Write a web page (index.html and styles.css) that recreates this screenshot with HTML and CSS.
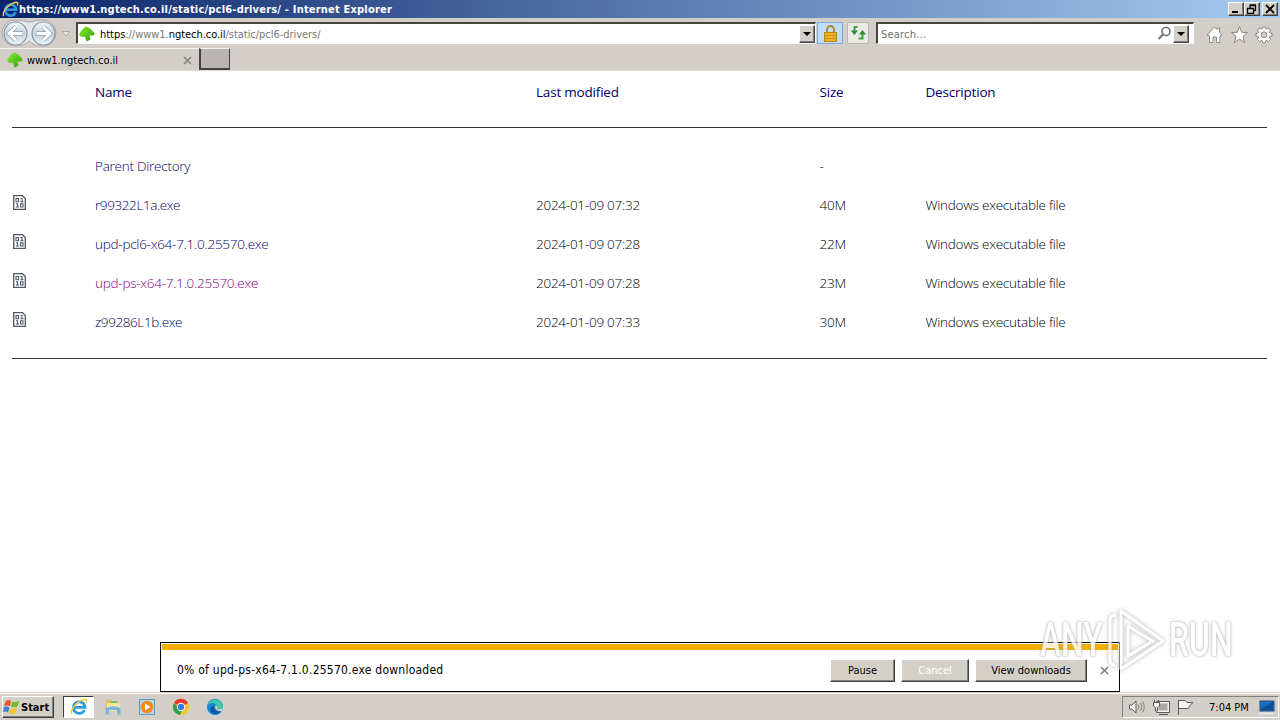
FILE: index.html
```html
<!DOCTYPE html>
<html lang="en">
<head>
  <meta charset="UTF-8">
  <title>https://www1.ngtech.co.il/static/pcl6-drivers/</title>
  <link rel="stylesheet" href="styles.css">
</head>
<body>
  <svg class="defs" width="0" height="0">
    <defs>
      <linearGradient id="green" x1="0" y1="0" x2="1" y2="1">
        <stop offset="0" stop-color="#8af02c"/>
        <stop offset="1" stop-color="#2b9a0c"/>
      </linearGradient>
      <linearGradient id="glass" x1="0" y1="0" x2="0" y2="1">
        <stop offset="0" stop-color="#f4f7fa"/>
        <stop offset=".5" stop-color="#c4d0dd"/>
        <stop offset="1" stop-color="#edf6fb"/>
      </linearGradient>
      <symbol id="tree" viewBox="0 0 16 16">
        <path d="M7 .5 C10 1 14.500 5 15.700 8 C15.500 9.500 13 9.800 10.500 9.500 L11.500 13.500 L7.500 15.500 L6 10.500 C4 11.500 1 11 .3 9 C.5 6 4 2 7 .5Z" fill="url(#green)"/>
      </symbol>
      <symbol id="ie" viewBox="0 0 18 18">
        <path d="M14.500 12 A5.800 5.800 0 1 1 15 9.300 H5" fill="none" stroke="#2a9be0" stroke-width="2.800"/>
        <path d="M2 16 C-1 12 8 2 15.500 1.300 C17.500 1.300 17 3.500 16 5" fill="none" stroke="#f3c644" stroke-width="1.500"/>
      </symbol>
      <symbol id="file" viewBox="0 0 13 15">
        <path d="M.7 .7 H9.500 L12.300 3.500 V14.300 H.7Z" fill="#fff" stroke="#4c5a68" stroke-width="1.300"/>
        <path d="M3 3.500 H5.500 V6.700 H3Z M7.500 3.500 H9 V6.700 M7.300 6.800 H10.500 M3 8.700 H4.500 V12 M2.800 12 H6 M7.500 8.700 H10 V12 H7.500Z" fill="none" stroke="#4c5a68" stroke-width="1.100"/>
      </symbol>
    </defs>
  </svg>

  <header class="titlebar">
    <svg class="title-icon"><use href="#ie"/></svg>
    <span class="title-text">https://www1.ngtech.co.il/static/pcl6-drivers/ - Internet Explorer</span>
    <div class="window-buttons">
      <button><svg width="12" height="10"><path d="M2 8 H8" stroke="#000" stroke-width="2"/></svg></button>
      <button><svg width="12" height="10"><path d="M4 4 V1.500 H9.500 V6.500 H8 M4 1 H10 M1.500 4.500 H7.500 V9.500 H1.500Z M1 4.500 H8" fill="none" stroke="#000" stroke-width="1.300"/></svg></button>
      <button class="close"><svg width="12" height="10"><path d="M2 1 L10 9 M10 1 L2 9" stroke="#000" stroke-width="1.800"/></svg></button>
    </div>
  </header>

  <div class="toolbar">
    <svg class="nav-buttons" width="72" height="30">
      <path d="M2 15 A13 13 0 0 1 15 2 Q22 2 29 4 Q36 2 43 2 A13 13 0 0 1 43 28 Q33 28 29 23 Q25 28 15 28 A13 13 0 0 1 2 15Z" fill="#e4e5e7" stroke="#aaa9ac"/>
      <circle cx="15.500" cy="15.500" r="11.500" fill="url(#glass)" stroke="#8796a5" stroke-width="1.200"/>
      <circle cx="43.500" cy="15.500" r="11.500" fill="url(#glass)" stroke="#8796a5" stroke-width="1.200"/>
      <path d="M23 15.500 H9 M15.500 9 L9 15.500 L15.500 22" fill="none" stroke="#8fa0b0" stroke-width="4.500"/>
      <path d="M36 15.500 H50 M43.500 9 L50 15.500 L43.500 22" fill="none" stroke="#8fa0b0" stroke-width="4.500"/>
      <path d="M22.500 15.500 H9 M15.500 9 L9 15.500 L15.500 22" fill="none" stroke="#fff" stroke-width="3"/>
      <path d="M36.500 15.500 H50 M43.500 9 L50 15.500 L43.500 22" fill="none" stroke="#fff" stroke-width="3"/>
      <path d="M62 13.500 H70 L66 18Z" fill="#e7e4df" stroke="#aaa6a0"/>
    </svg>
    <div class="address">
      <svg class="tree"><use href="#tree"/></svg>
      <span class="url"><b>https</b>://www1.<b>ngtech.co.il</b>/static/pcl6-drivers/</span>
      <span class="drop"></span>
    </div>
    <div class="lock">
      <svg width="15" height="17"><path d="M4 8 V4.500 A3.500 3.500 0 0 1 11 4.500 V8" fill="none" stroke="#a98224" stroke-width="1.800"/><rect x="1.500" y="7.500" width="12" height="9" fill="#f0b51d" stroke="#b9851a"/><path d="M2 10.500 H13 M2 13.500 H13" stroke="#c98f18"/></svg>
    </div>
    <div class="refresh">
      <svg width="16" height="14"><path d="M7.500 1 H4.500 V5 M8.500 12.500 H12.500 V8" fill="none" stroke="#38a53c" stroke-width="2"/><path d="M.5 4.500 H8 L4.500 9Z M9 8.500 H16 L12.500 4Z" fill="#279330"/></svg>
    </div>
    <div class="search">
      <span class="hint">Search...</span>
      <svg width="15" height="15"><circle cx="9" cy="5.500" r="4" fill="none" stroke="#777" stroke-width="1.700"/><path d="M6 8.500 L1.500 13" stroke="#777" stroke-width="2.200"/></svg>
      <span class="drop"></span>
    </div>
    <svg class="tools" width="72" height="20" fill="#fff" stroke="#8a8885">
      <path d="M1 10 L8.500 2 L11 4.500 V3 H13.500 V7.500 L16 10 L14 11 V17.500 H10.500 V12 H7 V17.500 H3.500 V11Z"/>
      <path d="M33.500 1.500 L35.700 7.300 L41.500 7.500 L37 11.300 L38.500 17.500 L33.500 14 L28.500 17.500 L30 11.300 L25.500 7.500 L31.300 7.300Z"/>
      <path d="M56.700 2 H59.300 L60 4.200 L62.500 3 L64.500 5 L63.300 7.500 L66 8.500 V11 L63.300 12 L64.500 14.500 L62.500 16.500 L60 15.300 L59.300 18 H56.700 L56 15.300 L53.500 16.500 L51.500 14.500 L52.700 12 L50 11 V8.500 L52.700 7.500 L51.500 5 L53.500 3 L56 4.200Z"/>
      <circle cx="58" cy="9.800" r="3" fill="#d4cec8"/>
    </svg>
  </div>

  <div class="tabs">
    <div class="tab">
      <svg class="tree"><use href="#tree"/></svg>
      <span class="tab-name">www1.ngtech.co.il</span>
      <svg width="9" height="9"><path d="M1 1 L8 8 M8 1 L1 8" stroke="#858280" stroke-width="1.700"/></svg>
    </div>
    <div class="new-tab"></div>
  </div>

  <main class="listing">
    <div class="row head">
      <span></span><a>Name</a><a>Last modified</a><a>Size</a><a>Description</a>
    </div>
    <hr>
    <div class="row">
      <span></span><a>Parent Directory</a><span></span><span>-</span><span></span>
    </div>
    <div class="row">
      <svg class="file"><use href="#file"/></svg><a class="short">r99322L1a.exe</a><span>2024-01-09 07:32</span><span>40M</span><span>Windows executable file</span>
    </div>
    <div class="row">
      <svg class="file"><use href="#file"/></svg><a>upd-pcl6-x64-7.1.0.25570.exe</a><span>2024-01-09 07:28</span><span>22M</span><span>Windows executable file</span>
    </div>
    <div class="row">
      <svg class="file"><use href="#file"/></svg><a class="visited">upd-ps-x64-7.1.0.25570.exe</a><span>2024-01-09 07:28</span><span>23M</span><span>Windows executable file</span>
    </div>
    <div class="row">
      <svg class="file"><use href="#file"/></svg><a class="short">z99286L1b.exe</a><span>2024-01-09 07:33</span><span>30M</span><span>Windows executable file</span>
    </div>
    <hr class="last">
  </main>

  <div class="download">
    <span class="message">0% of upd-ps-x64-7.1.0.25570.exe downloaded</span>
    <button class="pause">Pause</button>
    <button class="cancel" disabled>Cancel</button>
    <button class="view">View downloads</button>
    <svg width="9" height="9"><path d="M1 1 L8 8 M8 1 L1 8" stroke="#858280" stroke-width="1.700"/></svg>
  </div>

  <div class="watermark">
    <span>ANY</span>
    <svg width="58" height="66" viewBox="0 0 58 66" fill="none" stroke="#fff" stroke-width="3" stroke-linejoin="round">
      <path d="M8 8 Q2 8 2 13 V53 Q2 58 8 59 M13 4 L55 34 L13 62Z M20 19 V49 L43 35 M20 19 L46 35"/>
    </svg>
    <span>RUN</span>
  </div>

  <footer class="taskbar">
    <button class="start">
      <svg width="17" height="16"><path d="M3 2 Q6 0 8 2 L7 7 Q4 6 1 7Z" fill="#e8562a"/><path d="M9 2.500 Q12 4 16 2 L14.500 7.500 Q11 9 8 7.500Z" fill="#75b62c"/><path d="M1 8 Q4 7 6.500 8.500 L5 13.500 Q3 12 0 13Z" fill="#3c82cf"/><path d="M7.500 9 Q11 10.500 14 9 L12.500 14 Q9 16 6 14Z" fill="#f5c526"/></svg>
      Start
    </button>
    <div class="task-active"><svg width="18" height="18"><use href="#ie"/></svg></div>
    <svg class="task" width="18" height="18"><path d="M2 2 H7 L9 4 H15 V12 H2Z" fill="#dfbd5c"/><path d="M3 5 H16 V13 H3Z" fill="#f7e6a0"/><path d="M7 3 H13 V5 H7Z" fill="#7dbb6a"/><path d="M1.500 16.500 V10 Q9 6.500 16.500 10 V16.500 H13 V12 H5 V16.500Z" fill="#79b8dc"/></svg>
    <svg class="task" width="18" height="18"><rect x="1.500" y="1.500" width="15" height="15" fill="#b9d9f2" stroke="#5b9ac8"/><circle cx="9" cy="9" r="6.300" fill="#f28a16"/><path d="M7 5.500 L12.500 9 L7 12.500Z" fill="#fff"/></svg>
    <svg class="task" width="18" height="18"><circle cx="9" cy="9" r="8" fill="#fbc71e"/><path d="M9 9 L2 5 A8 8 0 0 1 16 5Z" fill="#e43d30"/><path d="M2 5 A8 8 0 0 0 8 17 L11 11 L6 9Z" fill="#2da24b"/><circle cx="9" cy="9" r="4.200" fill="#fff"/><circle cx="9" cy="9" r="3.200" fill="#3478e5"/></svg>
    <svg class="task" width="18" height="18"><circle cx="9" cy="9" r="8" fill="#1784d0"/><path d="M1.500 7 A8 8 0 0 1 17 9 Q16 12 11 11 Q12 6 7 5 Q3 5 1.500 7Z" fill="#41c9a5"/><path d="M8 8 Q7 14 15 13.500 Q10 18 5 14 Q3 9 8 8Z" fill="#0b54a0"/><path d="M9 8 Q12 7 11 11 Q15 12 17 9.500 L16 13 Q9 14 9 8Z" fill="#d4cec8"/></svg>
    <div class="tray">
      <svg width="67" height="18" fill="#f5f4f2" stroke="#5c5a58">
        <path d="M1.500 7 H4 L8 3 V15 L4 11 H1.500Z"/>
        <path d="M10 6.500 Q12 9 10 11.500 M12.500 5 Q15.500 9 12.500 13 M14.500 3.500 Q18 9 14.500 14.500" fill="none" stroke="#85827f"/>
        <path d="M29.500 4.500 H40.500 V13.500 H29.500Z" fill="#a9a6a3" stroke="#f5f4f2" stroke-width="2"/>
        <path d="M28.500 3.500 H41.500 V14.500 H28.500Z M31 16.500 H40" fill="none"/>
        <path d="M26.500 2 V4 M30.500 2 V4 M25.500 4.500 H31.500 V8 L29.500 9.500 V13 H27.500 V9.500 L25.500 8Z"/>
        <path d="M50.500 2 V17 M51 2.500 H57 L59 4.500 H65 L62 7.500 L60 10.500 H51"/>
      </svg>
      <time>7:04 PM</time>
      <svg width="17" height="17"><rect x="2" y="2" width="14" height="10" fill="#176fc5" stroke="#294c72"/><path d="M3 10 L15 3 V11 H3Z" fill="#0b4d9d"/><path d="M1 14.500 H15" stroke="#dde7ef" stroke-width="2"/></svg>
    </div>
  </footer>
</body>
</html>
```

FILE: styles.css
```css
* {
  box-sizing: border-box;
}

body {
  width: 1280px;
  height: 720px;
  margin: 0;
  overflow: hidden;
  display: flex;
  flex-direction: column;
  background: #fff;
  color: #000;
  font: 11px "DejaVu Sans Condensed", "DejaVu Sans", sans-serif;
  white-space: nowrap;
}

.defs {
  position: absolute;
}

svg {
  flex-shrink: 0;
}

button {
  padding: 0;
  background: #d4d0c8;
  border: 1px solid;
  border-color: #fff #404040 #404040 #fff;
  box-shadow: inset -1px -1px #808080;
  font: inherit;
}

.titlebar {
  height: 18px;
  display: flex;
  align-items: center;
  background: linear-gradient(90deg, #0a246a, #a6caf0);
  color: #fff;
  font-weight: bold;
}

.title-icon {
  width: 17px;
  height: 17px;
  margin: 0 0 0 2px;
}

.title-text {
  letter-spacing: .2px;
}

.window-buttons {
  display: flex;
  margin-left: auto;
  padding-right: 2px;
}

.window-buttons button {
  width: 16px;
  height: 14px;
  display: flex;
  align-items: center;
  justify-content: center;
}

.window-buttons .close {
  margin-left: 2px;
}

.toolbar {
  height: 30px;
  display: flex;
  align-items: center;
  background: #d4cec8;
}

.address, .search {
  height: 22px;
  display: flex;
  align-items: center;
  background: #fff;
  border: 1px solid #fff;
  border-top: 2px solid #484440;
  border-left: 2px solid #484440;
}

.address {
  width: 740px;
  margin-left: 4px;
}

.tree {
  width: 16px;
  height: 16px;
}

.address .tree {
  margin-left: 1px;
}

.url {
  margin-left: 5px;
  padding-top: 1px;
  color: #777;
  letter-spacing: -.04px;
}

.url b {
  color: #000;
  font-weight: normal;
}

.drop {
  width: 16px;
  height: 18px;
  margin-left: auto;
  display: flex;
  align-items: center;
  justify-content: center;
  background: #d4d0c8;
  border: 1px solid;
  border-color: #fff #404040 #404040 #fff;
  box-shadow: inset -1px -1px #808080;
}

.drop::after {
  content: "";
  border: 4px solid transparent;
  border-top-color: #000;
  border-bottom: 0;
}

.lock, .refresh {
  height: 22px;
  display: flex;
  align-items: center;
  justify-content: center;
}

.lock {
  width: 26px;
  margin-left: 1px;
  background: #c3dbfa;
  border: 1px solid #7fabdf;
}

.refresh {
  width: 22px;
  margin-left: 4px;
  background: #eceae7;
  border: 1px solid #b9b5b0;
  border-radius: 2px;
}

.search {
  width: 318px;
  margin-left: 7px;
  padding-left: 3px;
  color: #707070;
}

.hint {
  padding-top: 1px;
  letter-spacing: .2px;
}

.search svg {
  margin-left: auto;
}

.search .drop {
  margin: 0 4px 0 1px;
}

.tools {
  margin: 4px 0 0 12px;
}

.tabs {
  height: 23px;
  display: flex;
  background: #d4cec8;
  border-bottom: 1px solid #dedad6;
}

.tab {
  width: 199px;
  display: flex;
  align-items: center;
  padding: 1px 7px 0 7px;
  border-top: 1px solid #f6f4f2;
}

.tab-name {
  margin: 0 auto 0 4px;
}

.new-tab {
  width: 31px;
  height: 22px;
  background: #bab4b2;
  border: 1px solid #45413f;
  border-top-color: #f4f2f0;
  border-left-width: 2px;
  border-bottom-width: 2px;
}

.listing {
  flex: 1;
  padding: 2px 13px 0 12px;
  font: 300 13.5px "Open Sans", sans-serif;
  letter-spacing: -.25px;
}

.row {
  height: 39px;
  padding-bottom: 1px;
  display: grid;
  grid-template-columns: 83px 441px 283.500px 106px 1fr;
  align-items: center;
}

.row a {
  color: #00006a;
}

.row .short {
  letter-spacing: -.4px;
}

.row .visited {
  color: #800080;
}

.head {
  font-weight: 400;
  letter-spacing: -.2px;
}

.listing hr {
  height: 1px;
  margin: 15px 0 19px;
  border: 0;
  background: #333;
}

.listing .last {
  margin-top: 16px;
}

.file {
  width: 13px;
  height: 15px;
  margin: 0 0 5px 1px;
}

.download {
  width: 960px;
  height: 50px;
  align-self: center;
  margin-bottom: 1px;
  display: flex;
  align-items: center;
  padding: 7px 10px 0 16px;
  background: #fff;
  border: 1px solid #000;
  box-shadow: inset 0 0 0 1px #fff, inset 0 7px #f5ad00;
}

.message {
  margin-right: auto;
  padding-bottom: 1px;
  font-size: 12px;
  letter-spacing: .24px;
}

.download button {
  height: 23px;
  margin-right: 6px;
}

.download .pause {
  width: 65px;
}

.download .cancel {
  width: 68px;
  color: #fff;
}

.download .view {
  width: 112px;
  margin-right: 13px;
}

.watermark {
  position: absolute;
  left: 1040px;
  top: 607px;
  display: flex;
  align-items: center;
  color: #fff;
  font: 500 49px/40px Roboto, sans-serif;
  opacity: .8;
}

.watermark span {
  width: 68px;
  text-shadow: 0 0 4px #999, 0 0 2px #bbb;
  transform: scaleX(.65);
  transform-origin: left;
}

.watermark svg {
  margin-right: 3px;
  filter: drop-shadow(0 0 2px #999);
}

.taskbar {
  height: 27px;
  display: flex;
  align-items: center;
  background: #d4cec8;
  border-top: 1px solid #fff;
  box-shadow: 0 -1px #d4cec8;
}

.start {
  width: 52px;
  height: 22px;
  margin-left: 2px;
  display: flex;
  align-items: center;
  gap: 1px;
  font-weight: bold;
}

.task-active {
  width: 31px;
  height: 22px;
  margin: 0 10px 0 9px;
  display: flex;
  align-items: center;
  justify-content: center;
  background: #fff;
  border: 1px solid;
  border-color: #404040 #fff #fff #404040;
}

.task {
  margin-right: 16px;
}

.tray {
  width: 157px;
  height: 22px;
  margin-left: auto;
  margin-right: 1px;
  display: flex;
  align-items: center;
  padding-left: 5px;
  border: 1px solid;
  border-color: #808080 #fff #fff #808080;
}

.tray time {
  margin: 0 9px 0 14px;
}
```
